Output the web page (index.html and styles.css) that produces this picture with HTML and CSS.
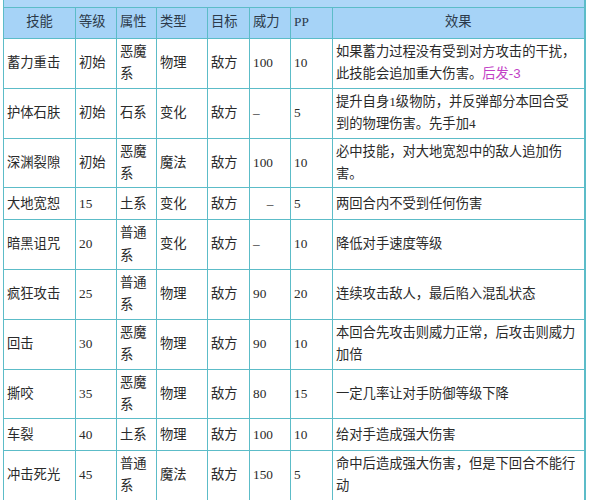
FILE: index.html
```html
<!DOCTYPE html>
<html lang="zh-CN">
<head>
<meta charset="utf-8">
<title>技能表</title>
<link rel="stylesheet" href="styles.css">
</head>
<body>
<table class="skills">
  <colgroup>
    <col class="c-name"><col class="c-lv"><col class="c-attr"><col class="c-type"><col class="c-tgt"><col class="c-pow"><col class="c-pp"><col class="c-eff">
  </colgroup>
  <tr class="cut"><td colspan="8"></td></tr>
  <tr class="head">
    <th class="center">技能</th><th>等级</th><th>属性</th><th>类型</th><th>目标</th><th>威力</th><th>PP</th><th class="center">效果</th>
  </tr>
  <tr>
    <td>蓄力重击</td><td>初始</td><td>恶魔系</td><td>物理</td><td>敌方</td><td>100</td><td>10</td>
    <td>如果蓄力过程没有受到对方攻击的干扰，<br>此技能会追加重大伤害。<span class="note">后发-3</span></td>
  </tr>
  <tr>
    <td>护体石肤</td><td>初始</td><td>石系</td><td>变化</td><td>敌方</td><td>–</td><td>5</td>
    <td>提升自身1级物防，并反弹部分本回合受<br>到的物理伤害。先手加4</td>
  </tr>
  <tr>
    <td>深渊裂隙</td><td>初始</td><td>恶魔系</td><td>魔法</td><td>敌方</td><td>100</td><td>10</td>
    <td>必中技能，对大地宽恕中的敌人追加伤<br>害。</td>
  </tr>
  <tr class="single">
    <td>大地宽恕</td><td>15</td><td>土系</td><td>变化</td><td>敌方</td><td class="center">–</td><td>5</td>
    <td>两回合内不受到任何伤害</td>
  </tr>
  <tr>
    <td>暗黑诅咒</td><td>20</td><td>普通系</td><td>变化</td><td>敌方</td><td>–</td><td>10</td>
    <td>降低对手速度等级</td>
  </tr>
  <tr>
    <td>疯狂攻击</td><td>25</td><td>普通系</td><td>物理</td><td>敌方</td><td>90</td><td>20</td>
    <td>连续攻击敌人，最后陷入混乱状态</td>
  </tr>
  <tr>
    <td>回击</td><td>30</td><td>恶魔系</td><td>物理</td><td>敌方</td><td>90</td><td>10</td>
    <td>本回合先攻击则威力正常，后攻击则威力<br>加倍</td>
  </tr>
  <tr>
    <td>撕咬</td><td>35</td><td>恶魔系</td><td>物理</td><td>敌方</td><td>80</td><td>15</td>
    <td>一定几率让对手防御等级下降</td>
  </tr>
  <tr class="single">
    <td>车裂</td><td>40</td><td>土系</td><td>物理</td><td>敌方</td><td>100</td><td>10</td>
    <td>给对手造成强大伤害</td>
  </tr>
  <tr>
    <td>冲击死光</td><td>45</td><td>普通系</td><td>魔法</td><td>敌方</td><td>150</td><td>5</td>
    <td>命中后造成强大伤害，但是下回合不能行<br>动</td>
  </tr>
</table>
</body>
</html>
```

FILE: styles.css
```css
html, body {
  margin: 0;
  padding: 0;
  background: #ffffff;
}

.skills {
  margin-left: 3px;
  border-collapse: collapse;
  table-layout: fixed;
  width: 581px;
  font-family: "Liberation Serif", "Noto Sans CJK SC", sans-serif;
  font-size: 13.3px;
  color: #2a2a2a;
  border-right: 2px solid #5cbcc8;
  border-bottom: 2px solid #5cbcc8;
}

.c-name { width: 72px; }
.c-lv { width: 41px; }
.c-attr { width: 40px; }
.c-type { width: 51px; }
.c-tgt { width: 42px; }
.c-pow { width: 41px; }
.c-pp { width: 42px; }
.c-eff { width: 252px; }

.skills td,
.skills th {
  border: 1px solid #5cbcc8;
  padding: 2px 3px 2px 3px;
  line-height: 22.2px;
  text-align: left;
  vertical-align: middle;
  font-weight: normal;
  word-break: break-all;
}

.skills tr {
  height: 49.8px;
}

.skills tr.single {
  height: 31.8px;
}

.skills tr.cut {
  height: 7px;
}

.skills tr.cut td {
  border-top: 0;
  padding: 0;
  height: 7px;
  line-height: 0;
  background: #aed7f8;
}

.skills tr.head {
  height: 31px;
}

.skills tr.head th {
  background: #a6d3f7;
  color: #2c3a4a;
  padding-top: 0;
  padding-bottom: 2px;
}

.skills .center {
  text-align: center;
}

.note {
  color: #c23fc6;
  font-family: "Liberation Sans", "Noto Sans CJK SC", sans-serif;
}
```
